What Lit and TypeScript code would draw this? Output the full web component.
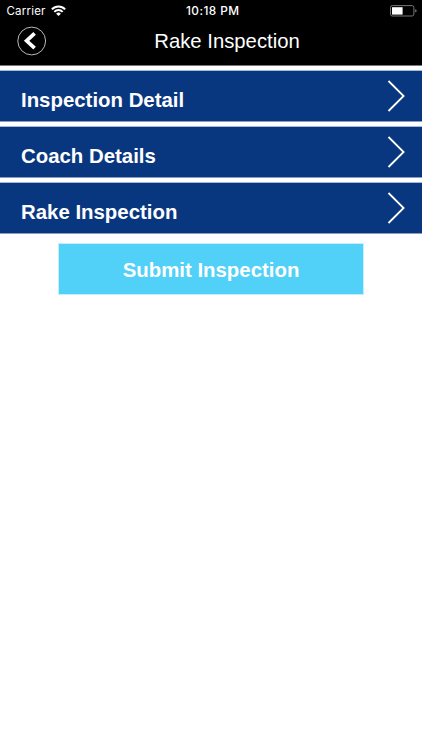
import { LitElement, html, css, svg } from "lit";
import { customElement, property } from "lit/decorators.js";

const SECTIONS = ["Inspection Detail", "Coach Details", "Rake Inspection"];

const wifiIcon = svg`
  <path d="M0.9 4.4 A8.8 8.8 0 0 1 14.1 4.4" stroke-width="2" />
  <path d="M3.3 6.9 A5.7 5.7 0 0 1 11.7 6.9" stroke-width="1.9" />
  <path d="M7.5 11 L5.1 8.8 A3.3 3.3 0 0 1 9.9 8.8 Z" fill="#fff" stroke="none" />
`;

@customElement("status-bar")
class StatusBar extends LitElement {
  render() {
    return html`
      <div class="left">
        <span class="carrier">Carrier</span>
        <svg class="wifi" width="15" height="12" viewBox="0 0 15 12" fill="none" stroke="#fff">
          ${wifiIcon}
        </svg>
      </div>
      <div class="time">10:18 PM</div>
      <div class="right">
        <svg width="27" height="12" viewBox="0 0 27 12">
          <rect x="0.5" y="0.6" width="23.4" height="10.4" rx="1.8" fill="none" stroke="#777" />
          <rect x="2" y="2.2" width="10.6" height="7.4" fill="#fff" />
          <path d="M25 4.2 Q26.8 4.6 26.8 5.8 Q26.8 7 25 7.4 Z" fill="#666" />
        </svg>
      </div>
    `;
  }

  static styles = css`
    :host {
      display: grid;
      grid-template-columns: 1fr auto 1fr;
      align-items: center;
      height: 22px;
      padding: 0 5px 0 6.5px;
      box-sizing: border-box;
      color: #fff;
      font-family: Inter, Roboto, sans-serif;
      font-size: 11.5px;
      line-height: 22px;
    }

    .left {
      display: flex;
      align-items: center;
      gap: 5px;
    }

    .carrier {
      letter-spacing: 0.2px;
    }

    .time {
      font-size: 11.8px;
      font-weight: 500;
      letter-spacing: 0.45px;
      padding-left: 2px;
    }

    .right {
      display: flex;
      justify-content: flex-end;
    }

    svg {
      display: block;
    }
  `;
}

@customElement("section-row")
class SectionRow extends LitElement {
  @property() label = "";

  render() {
    return html`
      <span class="label">${this.label}</span>
      <svg width="20" height="34" viewBox="0 0 20 34" fill="none" stroke="#fff" stroke-width="1.8">
        <path d="M1.5 2 L16.6 17 L1.5 32" />
      </svg>
    `;
  }

  static styles = css`
    :host {
      display: flex;
      justify-content: space-between;
      align-items: flex-start;
      height: 52px;
      padding: 8px 15px 0 21px;
      box-sizing: border-box;
      border-top: 1px solid #a3b9da;
      border-bottom: 1px solid #8c9cc4;
      background: #09377f;
      color: #fff;
    }

    .label {
      padding-top: 9px;
      font-size: 20.4px;
      font-weight: 700;
      line-height: 24px;
    }

    svg {
      display: block;
    }
  `;
}

@customElement("app-root")
class AppRoot extends LitElement {
  render() {
    return html`
      <header>
        <status-bar></status-bar>
        <div class="nav">
          <button class="back" aria-label="Back">
            <svg width="30" height="30" viewBox="0 0 30 30" fill="none" stroke="#fff">
              <circle cx="14.7" cy="15" r="13.9" stroke="#ccc" stroke-width="0.9" />
              <path d="M17.6 7.4 L9.6 14.8 L17.6 22.2" stroke-width="3.7" />
            </svg>
          </button>
          <h1>Rake Inspection</h1>
        </div>
      </header>
      <main>
        ${SECTIONS.map((s) => html`<section-row label=${s}></section-row>`)}
      </main>
      <button class="submit">Submit Inspection</button>
    `;
  }

  static styles = css`
    :host {
      display: flex;
      flex-direction: column;
      height: 100vh;
      background: #fff;
      font-family: "Liberation Sans", Arial, sans-serif;
    }

    header {
      height: 66px;
      box-sizing: border-box;
      border-bottom: 1px solid #777;
      background: #000;
      color: #fff;
    }

    .nav {
      display: grid;
      grid-template-columns: 80px 1fr 80px;
      height: 38px;
      align-items: center;
    }

    button {
      border: none;
      padding: 0;
      font: inherit;
      color: #fff;
      background: none;
    }

    .back {
      justify-self: start;
      margin-left: 17px;
    }

    .back svg {
      display: block;
    }

    h1 {
      margin: 0;
      padding-left: 32px;
      text-align: center;
      font-size: 20.3px;
      font-weight: 400;
      line-height: 24px;
    }

    main {
      display: flex;
      flex-direction: column;
      gap: 4px;
      margin-top: 4px;
    }

    .submit {
      align-self: center;
      width: 306px;
      height: 52px;
      box-sizing: border-box;
      margin-top: 9px;
      padding-top: 3px;
      border: 1px solid #c5effc;
      background: #51d0f8;
      font-size: 20.4px;
      font-weight: 700;
    }
  `;
}
